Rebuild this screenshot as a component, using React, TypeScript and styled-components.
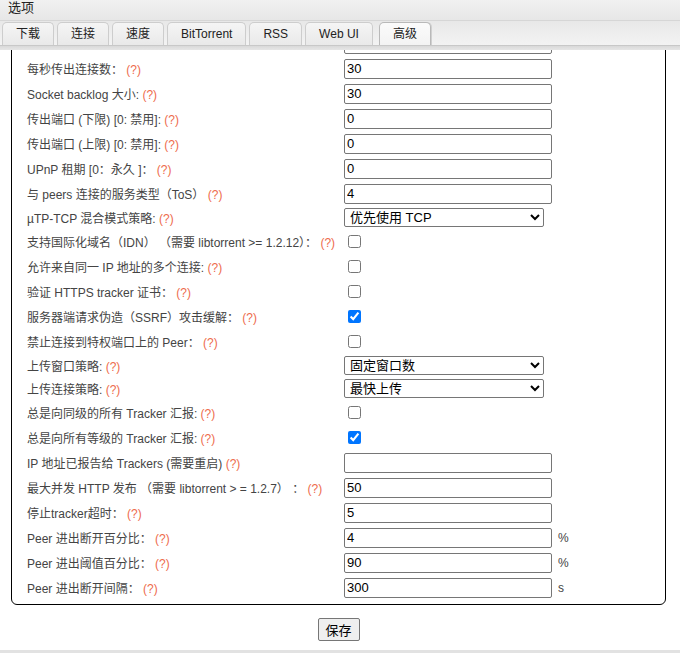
import React from "react";
import styled, { createGlobalStyle } from "styled-components";

const GlobalStyle = createGlobalStyle`
  html, body {
    margin: 0;
    padding: 0;
    background: #ffffff;
  }
  body {
    font-family: "Liberation Sans", "Noto Sans CJK SC", sans-serif;
  }
`;

const Window = styled.div`
  width: 680px;
  height: 653px;
  display: flex;
  flex-direction: column;
  overflow: hidden;
  background: #ffffff;
`;

const TitleBar = styled.div`
  height: 20px;
  flex: none;
  padding-left: 8px;
  background: linear-gradient(#f1f1f1, #e7e7e7);
  border-bottom: 1px solid #d6d6d6;
  font-size: 13px;
  line-height: 16px;
  color: #222;
`;

const TabStrip = styled.div`
  height: 24px;
  flex: none;
  display: flex;
  align-items: flex-end;
  gap: 3px;
  padding-left: 2px;
  background: linear-gradient(#e8e8e8, #f3f3f3);
  border-bottom: 1px solid #c8c8c8;
`;

const TabFloor = styled.div`
  height: 4px;
  flex: none;
  background: linear-gradient(#d9d9d9, #e6e6e6);
`;

const Tab = styled.div<{ $active?: boolean }>`
  height: 22px;
  padding: 0 13px;
  margin-left: ${(p) => (p.$active ? "3px" : "0")};
  border: 1px solid ${(p) => (p.$active ? "#b9b9b9" : "#cdcdcd")};
  border-bottom: none;
  border-radius: 5px 5px 0 0;
  background: ${(p) =>
    p.$active
      ? "linear-gradient(#fbfbfb, #f3f3f3)"
      : "linear-gradient(#f5f5f5, #e9e9e9)"};
  box-shadow: ${(p) => (p.$active ? "1px 0 0 #d0d0d0" : "none")};
  font-size: 12px;
  line-height: 22px;
  color: #222;
  white-space: nowrap;
`;

const Content = styled.div`
  flex: 1;
  overflow: hidden;
  padding: 0 14px 0 11px;
  display: flex;
  flex-direction: column;
  align-items: stretch;
`;

/* the dialog is scrolled: the top of the fieldset sits above the view */
const Panel = styled.div`
  margin-top: -20px;
  padding: 0 0 4px 15px;
  border: 1px solid #000;
  border-radius: 6px;
`;

const Row = styled.div<{ $h: number }>`
  height: ${(p) => p.$h}px;
  display: grid;
  grid-template-columns: 317px 208px 1fr;
  align-items: center;
`;

const Label = styled.div`
  font-size: 12px;
  color: #444;
  white-space: nowrap;
`;

const Hint = styled.span`
  color: #ee6c4d;
`;

const TextInput = styled.input`
  box-sizing: border-box;
  width: 208px;
  height: 20px;
  margin: 0;
  padding: 1px 2px;
  border: 1px solid #767676;
  border-radius: 2px;
  font-family: "Liberation Sans", "Noto Sans CJK SC", sans-serif;
  font-size: 13px;
  color: #000;
  background: #fff;
`;

const Select = styled.select`
  box-sizing: border-box;
  width: 200px;
  height: 19px;
  margin: 0;
  padding: 0 0 0 1px;
  border: 1px solid #767676;
  border-radius: 2px;
  font-family: "Liberation Sans", "Noto Sans CJK SC", sans-serif;
  font-size: 13px;
  color: #000;
  background: #fff;
`;

const Check = styled.input`
  width: 13px;
  height: 13px;
  margin: 3px 3px 3px 4px;
`;

const Unit = styled.span`
  padding-left: 6px;
  font-size: 12px;
  color: #444;
`;

const Actions = styled.div`
  display: flex;
  justify-content: center;
  margin-top: 13px;
`;

const SaveButton = styled.button`
  box-sizing: border-box;
  width: 42px;
  height: 23px;
  padding: 0;
  border: 1px solid #767676;
  border-radius: 2px;
  background: #efefef;
  font-family: "Liberation Sans", "Noto Sans CJK SC", sans-serif;
  font-size: 13px;
  color: #000;
`;

const Footer = styled.div`
  height: 3px;
  flex: none;
  background: #e2e2e2;
`;

type Setting =
  | { label: string; kind: "input"; value: string; unit?: string }
  | { label: string; kind: "select"; value: string }
  | { label: string; kind: "check"; checked: boolean };

const settings: Setting[] = [
  { label: "每秒传出连接数：", kind: "input", value: "30" },
  { label: "Socket backlog 大小:", kind: "input", value: "30" },
  { label: "传出端口 (下限) [0: 禁用]:", kind: "input", value: "0" },
  { label: "传出端口 (上限) [0: 禁用]:", kind: "input", value: "0" },
  { label: "UPnP 租期 [0：永久 ]：", kind: "input", value: "0" },
  { label: "与 peers 连接的服务类型（ToS）", kind: "input", value: "4" },
  { label: "µTP-TCP 混合模式策略:", kind: "select", value: "优先使用 TCP" },
  {
    label: "支持国际化域名（IDN） （需要 libtorrent >= 1.2.12）：",
    kind: "check",
    checked: false,
  },
  { label: "允许来自同一 IP 地址的多个连接:", kind: "check", checked: false },
  { label: "验证 HTTPS tracker 证书：", kind: "check", checked: false },
  { label: "服务器端请求伪造（SSRF）攻击缓解：", kind: "check", checked: true },
  { label: "禁止连接到特权端口上的 Peer：", kind: "check", checked: false },
  { label: "上传窗口策略:", kind: "select", value: "固定窗口数" },
  { label: "上传连接策略:", kind: "select", value: "最快上传" },
  { label: "总是向同级的所有 Tracker 汇报:", kind: "check", checked: false },
  { label: "总是向所有等级的 Tracker 汇报:", kind: "check", checked: true },
  { label: "IP 地址已报告给 Trackers (需要重启)", kind: "input", value: "" },
  {
    label: "最大并发 HTTP 发布 （需要 libtorrent > = 1.2.7） ：",
    kind: "input",
    value: "50",
  },
  { label: "停止tracker超时：", kind: "input", value: "5" },
  { label: "Peer 进出断开百分比：", kind: "input", value: "4", unit: "%" },
  { label: "Peer 进出阈值百分比：", kind: "input", value: "90", unit: "%" },
  { label: "Peer 进出断开间隔：", kind: "input", value: "300", unit: "s" },
];

const tabs = ["下载", "连接", "速度", "BitTorrent", "RSS", "Web UI", "高级"];

function SettingRow({ s }: { s: Setting }) {
  return (
    <Row $h={s.kind === "select" ? 23 : 25}>
      <Label>
        {s.label} <Hint>(?)</Hint>
      </Label>
      {s.kind === "input" && (
        <>
          <TextInput type="text" defaultValue={s.value} />
          {s.unit ? <Unit>{s.unit}</Unit> : <span />}
        </>
      )}
      {s.kind === "select" && (
        <div>
          <Select defaultValue={s.value}>
            <option value={s.value}>{s.value}</option>
          </Select>
        </div>
      )}
      {s.kind === "check" && (
        <div>
          <Check type="checkbox" defaultChecked={s.checked} />
        </div>
      )}
    </Row>
  );
}

export default function App() {
  return (
    <Window>
      <GlobalStyle />
      <TitleBar>选项</TitleBar>
      <TabStrip>
        {tabs.map((t) => (
          <Tab key={t} $active={t === "高级"}>
            {t}
          </Tab>
        ))}
      </TabStrip>
      <TabFloor />
      <Content>
        <Panel>
          <Row $h={25}>
            <Label />
            <TextInput type="text" defaultValue="" />
          </Row>
          {settings.map((s) => (
            <SettingRow key={s.label} s={s} />
          ))}
        </Panel>
        <Actions>
          <SaveButton>保存</SaveButton>
        </Actions>
      </Content>
      <Footer />
    </Window>
  );
}
